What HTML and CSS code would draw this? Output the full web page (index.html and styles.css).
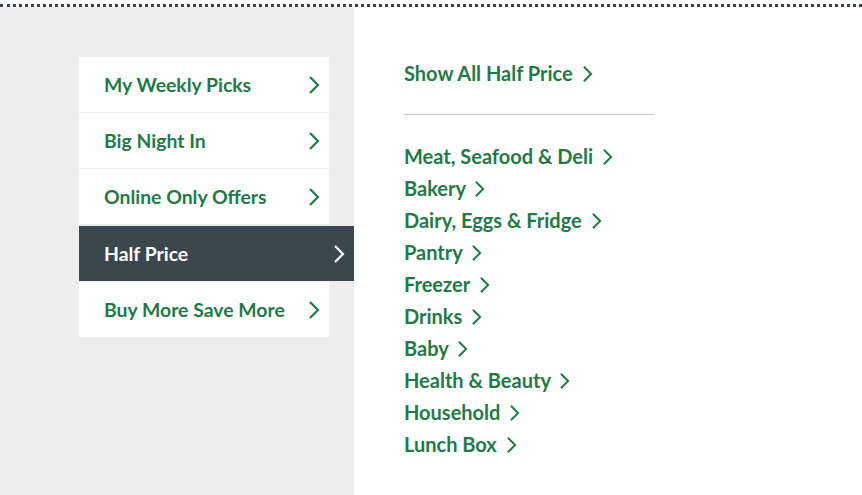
FILE: index.html
```html
<!DOCTYPE html>
<html lang="en">
<head>
  <meta charset="UTF-8">
  <title>Specials</title>
  <link rel="stylesheet" href="styles.css">
</head>
<body>
  <div class="menu">
    <div class="side">
      <ul class="cats">
        <li><a href="#">My Weekly Picks <svg class="chev" viewBox="0 0 12 20"><path d="M2 2l8 8-8 8"/></svg></a></li>
        <li><a href="#">Big Night In <svg class="chev" viewBox="0 0 12 20"><path d="M2 2l8 8-8 8"/></svg></a></li>
        <li><a href="#">Online Only Offers <svg class="chev" viewBox="0 0 12 20"><path d="M2 2l8 8-8 8"/></svg></a></li>
        <li class="active"><a href="#">Half Price <svg class="chev" viewBox="0 0 12 20"><path d="M2 2l8 8-8 8"/></svg></a></li>
        <li><a href="#">Buy More Save More <svg class="chev" viewBox="0 0 12 20"><path d="M2 2l8 8-8 8"/></svg></a></li>
      </ul>
    </div>
    <div class="sub">
      <a class="show-all" href="#">Show All Half Price <svg class="chev small" viewBox="0 0 12 20"><path d="M2 2l8 8-8 8"/></svg></a>
      <hr>
      <ul class="subcats">
        <li><a href="#">Meat, Seafood &amp; Deli <svg class="chev small" viewBox="0 0 12 20"><path d="M2 2l8 8-8 8"/></svg></a></li>
        <li><a href="#">Bakery <svg class="chev small" viewBox="0 0 12 20"><path d="M2 2l8 8-8 8"/></svg></a></li>
        <li><a href="#">Dairy, Eggs &amp; Fridge <svg class="chev small" viewBox="0 0 12 20"><path d="M2 2l8 8-8 8"/></svg></a></li>
        <li><a href="#">Pantry <svg class="chev small" viewBox="0 0 12 20"><path d="M2 2l8 8-8 8"/></svg></a></li>
        <li><a href="#">Freezer <svg class="chev small" viewBox="0 0 12 20"><path d="M2 2l8 8-8 8"/></svg></a></li>
        <li><a href="#">Drinks <svg class="chev small" viewBox="0 0 12 20"><path d="M2 2l8 8-8 8"/></svg></a></li>
        <li><a href="#">Baby <svg class="chev small" viewBox="0 0 12 20"><path d="M2 2l8 8-8 8"/></svg></a></li>
        <li><a href="#">Health &amp; Beauty <svg class="chev small" viewBox="0 0 12 20"><path d="M2 2l8 8-8 8"/></svg></a></li>
        <li><a href="#">Household <svg class="chev small" viewBox="0 0 12 20"><path d="M2 2l8 8-8 8"/></svg></a></li>
        <li><a href="#">Lunch Box <svg class="chev small" viewBox="0 0 12 20"><path d="M2 2l8 8-8 8"/></svg></a></li>
      </ul>
    </div>
  </div>
</body>
</html>
```

FILE: styles.css
```css
body {
  margin: 0;
  font-family: Lato, "Liberation Sans", sans-serif;
  background: #fff;
  color: #1e7b45;
}
a { color: inherit; text-decoration: none; }
ul { list-style: none; margin: 0; padding: 0; }

.menu {
  margin-top: 4px;
  border-top: 3px dotted #3b444b;
  display: flex;
  min-height: 488px;
}

.side {
  width: 354px;
  background: #ededed;
  padding: 50px 0 0 79px;
  box-sizing: border-box;
}
.cats { width: 250px; }
.cats li {
  background: #fff;
  border-bottom: 1px solid #ececec;
}
.cats li:last-child { border-bottom: none; }
.cats a {
  display: flex;
  align-items: center;
  justify-content: space-between;
  height: 55px;
  padding: 0 9px 0 25px;
  font-size: 19.4px;
  font-weight: 700;
}
.cats .active {
  background: #3a474e;
  margin-top: 1px;
  margin-right: -25px;
  color: #fff;
}
.cats .active a { padding-right: 9px; }

.chev {
  width: 12px;
  height: 20px;
  fill: none;
  stroke: currentColor;
  stroke-width: 2.2;
}
.chev.small { width: 11px; height: 18px; margin-left: 4px; vertical-align: -2px; }

.sub {
  padding: 53px 0 0 50px;
}
.show-all {
  display: inline-block;
  font-size: 20px;
  font-weight: 700;
  line-height: 26px;
}
.sub hr {
  width: 250px;
  margin: 28px 0 25px;
  border: none;
  border-top: 1px solid #c8c8c8;
}
.subcats li {
  font-size: 20px;
  font-weight: 700;
  line-height: 32px;
}
```
